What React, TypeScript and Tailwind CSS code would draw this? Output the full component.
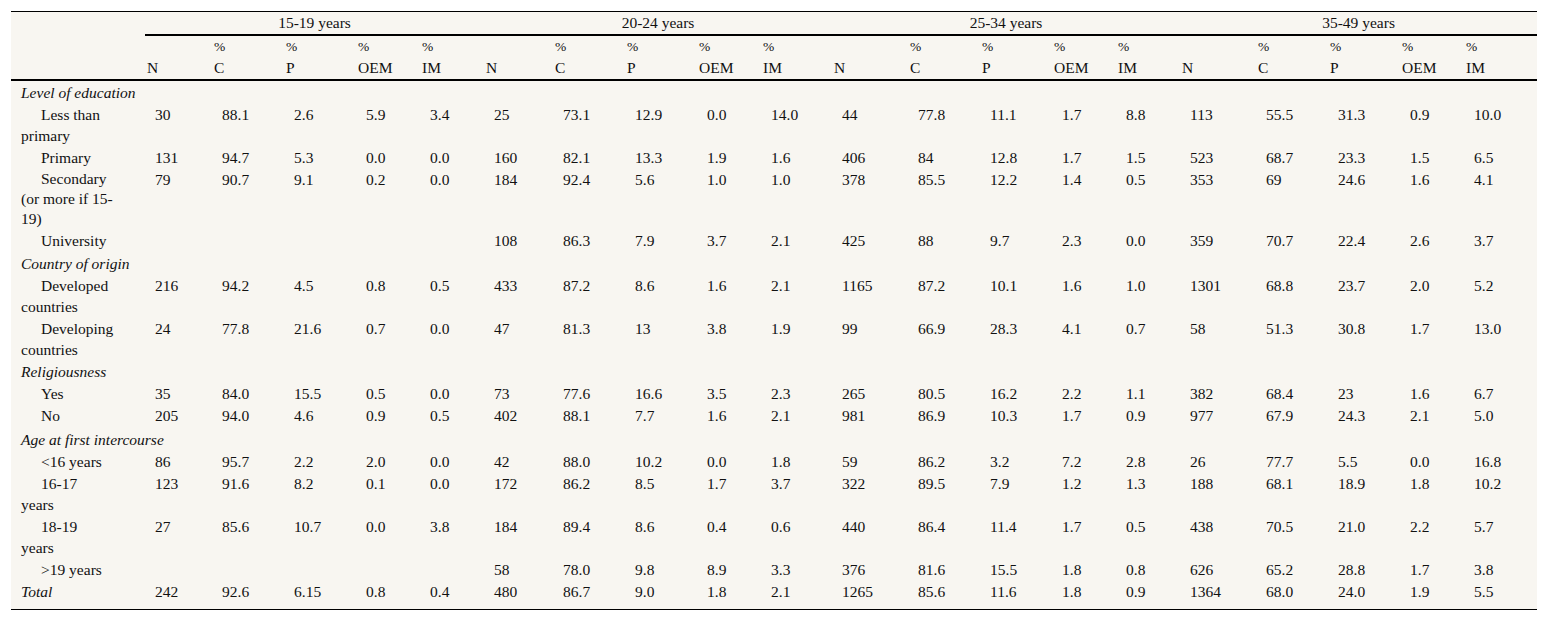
import React from "react";

type Row = {
  label: React.ReactNode;
  italic?: boolean;
  category?: boolean;
  indent?: boolean;
  values?: string[];
  last?: boolean;
  tight?: boolean;
  extra?: string;
};

const blank5 = ["", "", "", "", ""];

const rows: Row[] = [
  { label: "Level of education", category: true, extra: "pt-[0.5px]" },
  {
    label: (
      <>
        Less than
        <br />
        primary
      </>
    ),
    indent: true,
    values: ["30", "88.1", "2.6", "5.9", "3.4", "25", "73.1", "12.9", "0.0", "14.0", "44", "77.8", "11.1", "1.7", "8.8", "113", "55.5", "31.3", "0.9", "10.0"],
  },
  {
    label: "Primary",
    indent: true,
    values: ["131", "94.7", "5.3", "0.0", "0.0", "160", "82.1", "13.3", "1.9", "1.6", "406", "84", "12.8", "1.7", "1.5", "523", "68.7", "23.3", "1.5", "6.5"],
  },
  {
    label: (
      <>
        Secondary
        <br />
        (or more if 15-
        <br />
        19)
      </>
    ),
    indent: true,
    tight: true,
    values: ["79", "90.7", "9.1", "0.2", "0.0", "184", "92.4", "5.6", "1.0", "1.0", "378", "85.5", "12.2", "1.4", "0.5", "353", "69", "24.6", "1.6", "4.1"],
  },
  {
    label: "University",
    indent: true,
    values: [...blank5, "108", "86.3", "7.9", "3.7", "2.1", "425", "88", "9.7", "2.3", "0.0", "359", "70.7", "22.4", "2.6", "3.7"],
  },
  { label: "Country of origin", category: true, extra: "pt-[1.5px]" },
  {
    label: (
      <>
        Developed
        <br />
        countries
      </>
    ),
    indent: true,
    values: ["216", "94.2", "4.5", "0.8", "0.5", "433", "87.2", "8.6", "1.6", "2.1", "1165", "87.2", "10.1", "1.6", "1.0", "1301", "68.8", "23.7", "2.0", "5.2"],
  },
  {
    label: (
      <>
        Developing
        <br />
        countries
      </>
    ),
    indent: true,
    values: ["24", "77.8", "21.6", "0.7", "0.0", "47", "81.3", "13", "3.8", "1.9", "99", "66.9", "28.3", "4.1", "0.7", "58", "51.3", "30.8", "1.7", "13.0"],
  },
  { label: "Religiousness", category: true, extra: "pt-[0.5px]" },
  {
    label: "Yes",
    indent: true,
    values: ["35", "84.0", "15.5", "0.5", "0.0", "73", "77.6", "16.6", "3.5", "2.3", "265", "80.5", "16.2", "2.2", "1.1", "382", "68.4", "23", "1.6", "6.7"],
  },
  {
    label: "No",
    indent: true,
    values: ["205", "94.0", "4.6", "0.9", "0.5", "402", "88.1", "7.7", "1.6", "2.1", "981", "86.9", "10.3", "1.7", "0.9", "977", "67.9", "24.3", "2.1", "5.0"],
  },
  { label: "Age at first intercourse", category: true, extra: "pt-[2.5px]" },
  {
    label: "<16 years",
    indent: true,
    values: ["86", "95.7", "2.2", "2.0", "0.0", "42", "88.0", "10.2", "0.0", "1.8", "59", "86.2", "3.2", "7.2", "2.8", "26", "77.7", "5.5", "0.0", "16.8"],
  },
  {
    label: (
      <>
        16-17
        <br />
        years
      </>
    ),
    indent: true,
    values: ["123", "91.6", "8.2", "0.1", "0.0", "172", "86.2", "8.5", "1.7", "3.7", "322", "89.5", "7.9", "1.2", "1.3", "188", "68.1", "18.9", "1.8", "10.2"],
  },
  {
    label: (
      <>
        18-19
        <br />
        years
      </>
    ),
    indent: true,
    values: ["27", "85.6", "10.7", "0.0", "3.8", "184", "89.4", "8.6", "0.4", "0.6", "440", "86.4", "11.4", "1.7", "0.5", "438", "70.5", "21.0", "2.2", "5.7"],
  },
  {
    label: ">19 years",
    indent: true,
    values: [...blank5, "58", "78.0", "9.8", "8.9", "3.3", "376", "81.6", "15.5", "1.8", "0.8", "626", "65.2", "28.8", "1.7", "3.8"],
  },
  {
    label: "Total",
    italic: true,
    last: true,
    values: ["242", "92.6", "6.15", "0.8", "0.4", "480", "86.7", "9.0", "1.8", "2.1", "1265", "85.6", "11.6", "1.8", "0.9", "1364", "68.0", "24.0", "1.9", "5.5"],
  },
];

const colWidths = [
  134,
  67, 72, 72, 64, 64,
  69, 72, 72, 64, 71,
  76, 72, 72, 64, 64,
  76, 72, 72, 64, 73,
];

const groups = ["15-19 years", "20-24 years", "25-34 years", "35-49 years"];
const subs = ["N", "C", "P", "OEM", "IM"];

export default function App() {
  return (
    <div className="min-h-[621px] bg-white pt-[11px] px-[11px] text-[#111] text-[15.5px] leading-[21px] font-['Liberation_Serif','Times_New_Roman',serif]">
      <div className="bg-[#f8f6f1] border-t border-b border-black">
        <table className="w-[1526px] table-fixed border-separate border-spacing-0">
          <colgroup>
            {colWidths.map((w, i) => (
              <col key={i} style={{ width: w }} />
            ))}
          </colgroup>
          <thead>
            <tr>
              <th rowSpan={3} className="border-b-2 border-black font-normal" />
              {groups.map((g) => (
                <th
                  key={g}
                  colSpan={5}
                  className="border-b-2 border-black font-normal text-center pt-0 pb-px"
                >
                  {g}
                </th>
              ))}
            </tr>
            <tr>
              {groups.map((g) =>
                subs.map((s) => (
                  <th key={g + s} className="font-normal text-left pl-[2px] py-0 text-[13.5px]">
                    {s === "N" ? "" : "%"}
                  </th>
                ))
              )}
            </tr>
            <tr>
              {groups.map((g) =>
                subs.map((s) => (
                  <th
                    key={g + s}
                    className="font-normal text-left pl-[2px] pt-0 pb-px border-b-2 border-black"
                  >
                    {s}
                  </th>
                ))
              )}
            </tr>
          </thead>
          <tbody>
            {rows.map((r, i) => {
              const pad = r.last ? "pt-[0.5px] pb-[7px]" : "py-[0.5px]";
              return r.category ? (
                <tr key={i}>
                  <td colSpan={21} className={"pl-[10px] pb-[0.5px] italic whitespace-nowrap align-top " + (r.extra ?? "")}>
                    {r.label}
                  </td>
                </tr>
              ) : (
                <tr key={i}>
                  <td
                    className={
                      "pl-[10px] align-top " +
                      pad +
                      " " +
                      (r.tight ? "leading-[20px] " : "") +
                      (r.italic ? "italic " : "") +
                      (r.indent ? "indent-[20px]" : "")
                    }
                  >
                    {r.label}
                  </td>
                  {r.values!.map((v, j) => (
                    <td key={j} className={"pl-[10px] align-top whitespace-nowrap " + pad}>
                      {v}
                    </td>
                  ))}
                </tr>
              );
            })}
          </tbody>
        </table>
      </div>
    </div>
  );
}
